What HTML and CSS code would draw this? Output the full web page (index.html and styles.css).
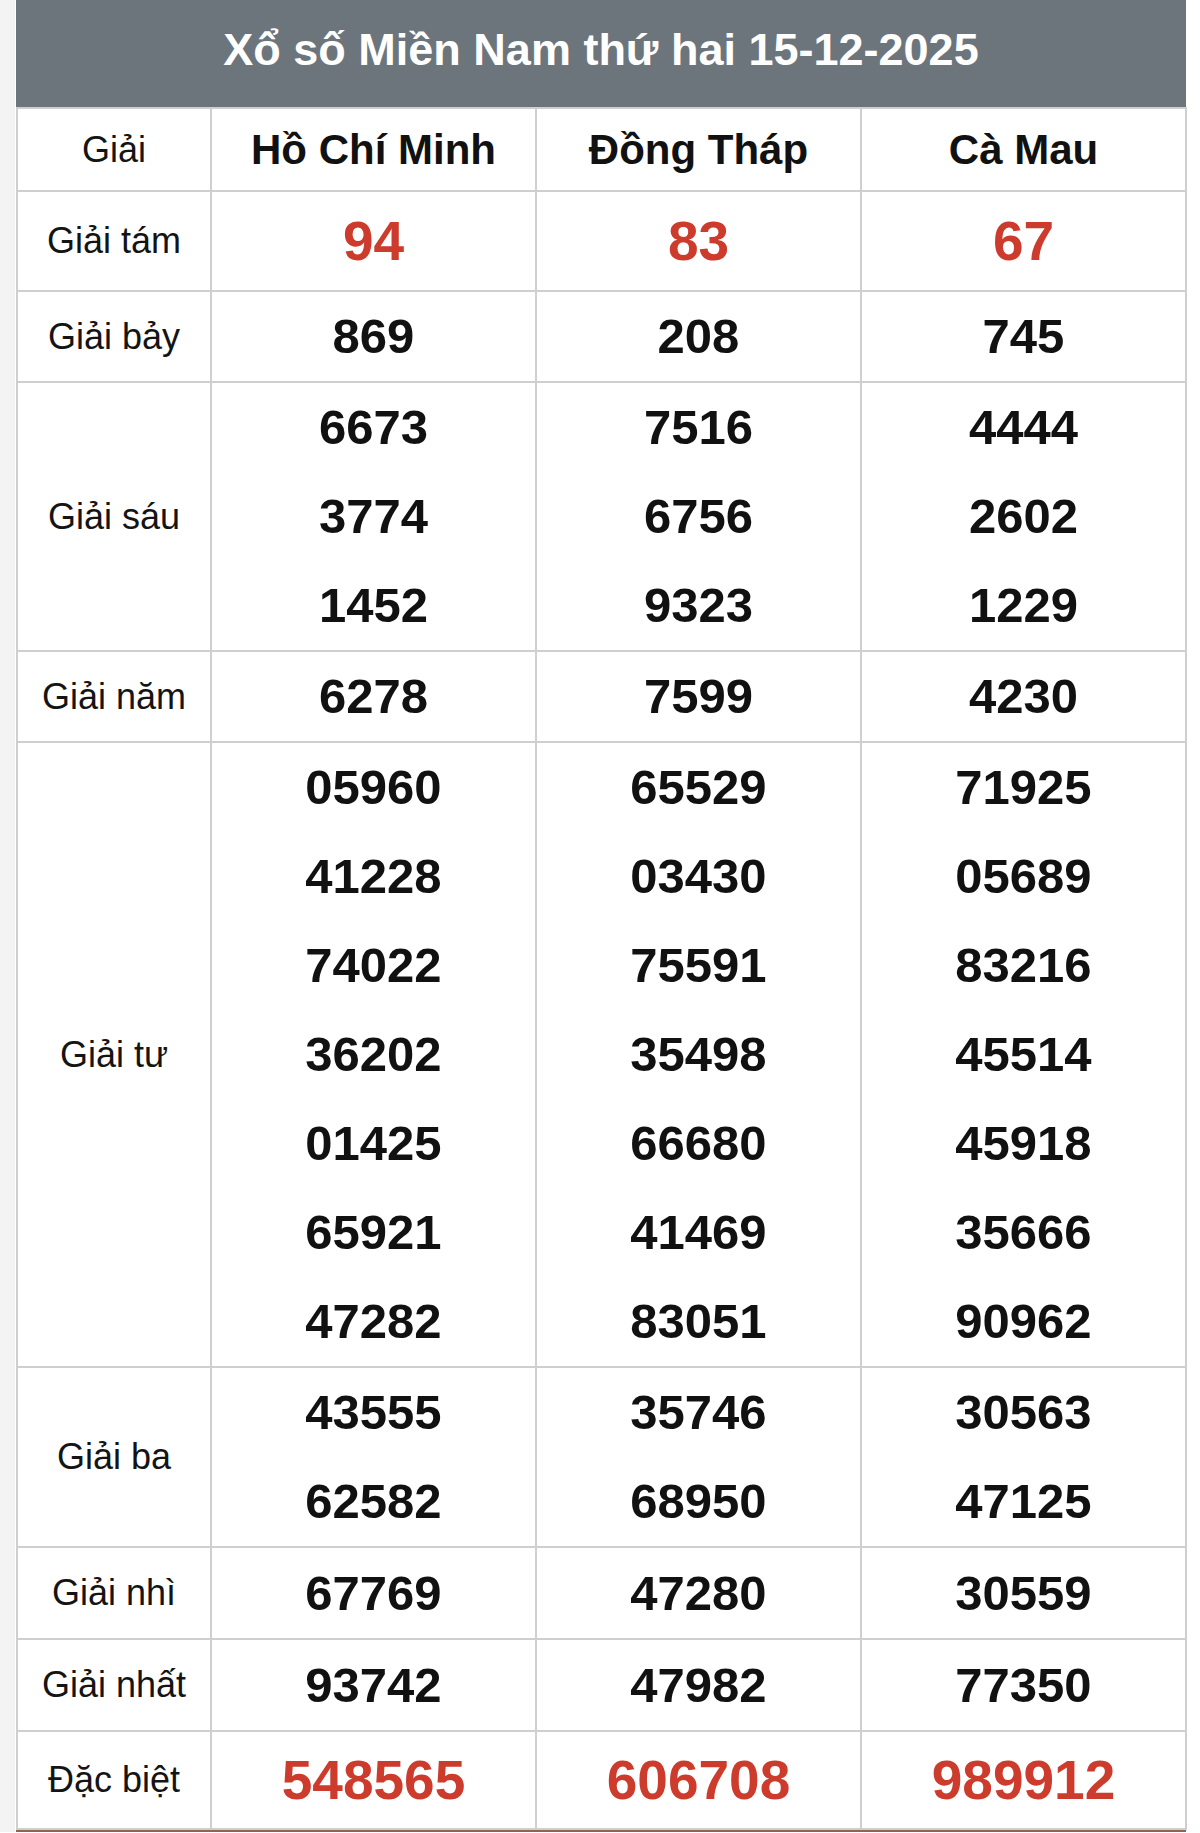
FILE: index.html
```html
<!DOCTYPE html>
<html lang="vi">
<head>
<meta charset="utf-8">
<title>Xổ số Miền Nam thứ hai 15-12-2025</title>
<link rel="stylesheet" href="styles.css">
</head>
<body>
<div class="page">
  <div class="board">
    <div class="title">Xổ số Miền Nam thứ hai 15-12-2025</div>
    <table class="kq">
      <colgroup>
        <col class="c-label">
        <col class="c-prov">
        <col class="c-prov">
        <col class="c-prov">
      </colgroup>
      <thead>
        <tr class="r-head">
          <th class="lbl">Giải</th>
          <th class="prov">Hồ Chí Minh</th>
          <th class="prov">Đồng Tháp</th>
          <th class="prov">Cà Mau</th>
        </tr>
      </thead>
      <tbody>
        <tr class="r-g8">
          <td class="lbl">Giải tám</td>
          <td><div class="num red big">94</div></td>
          <td><div class="num red big">83</div></td>
          <td><div class="num red big">67</div></td>
        </tr>
        <tr>
          <td class="lbl">Giải bảy</td>
          <td><div class="num">869</div></td>
          <td><div class="num">208</div></td>
          <td><div class="num">745</div></td>
        </tr>
        <tr>
          <td class="lbl">Giải sáu</td>
          <td><div class="num">6673</div><div class="num">3774</div><div class="num">1452</div></td>
          <td><div class="num">7516</div><div class="num">6756</div><div class="num">9323</div></td>
          <td><div class="num">4444</div><div class="num">2602</div><div class="num">1229</div></td>
        </tr>
        <tr>
          <td class="lbl">Giải năm</td>
          <td><div class="num">6278</div></td>
          <td><div class="num">7599</div></td>
          <td><div class="num">4230</div></td>
        </tr>
        <tr>
          <td class="lbl">Giải tư</td>
          <td>
            <div class="num">05960</div><div class="num">41228</div><div class="num">74022</div><div class="num">36202</div><div class="num">01425</div><div class="num">65921</div><div class="num">47282</div>
          </td>
          <td>
            <div class="num">65529</div><div class="num">03430</div><div class="num">75591</div><div class="num">35498</div><div class="num">66680</div><div class="num">41469</div><div class="num">83051</div>
          </td>
          <td>
            <div class="num">71925</div><div class="num">05689</div><div class="num">83216</div><div class="num">45514</div><div class="num">45918</div><div class="num">35666</div><div class="num">90962</div>
          </td>
        </tr>
        <tr>
          <td class="lbl">Giải ba</td>
          <td><div class="num">43555</div><div class="num">62582</div></td>
          <td><div class="num">35746</div><div class="num">68950</div></td>
          <td><div class="num">30563</div><div class="num">47125</div></td>
        </tr>
        <tr class="r-single">
          <td class="lbl">Giải nhì</td>
          <td><div class="num">67769</div></td>
          <td><div class="num">47280</div></td>
          <td><div class="num">30559</div></td>
        </tr>
        <tr class="r-single">
          <td class="lbl">Giải nhất</td>
          <td><div class="num">93742</div></td>
          <td><div class="num">47982</div></td>
          <td><div class="num">77350</div></td>
        </tr>
        <tr class="r-db">
          <td class="lbl">Đặc biệt</td>
          <td><div class="num red big">548565</div></td>
          <td><div class="num red big">606708</div></td>
          <td><div class="num red big">989912</div></td>
        </tr>
      </tbody>
    </table>
    <div class="edge"></div>
  </div>
</div>
</body>
</html>
```

FILE: styles.css
```css
html, body {
  margin: 0;
  padding: 0;
  background: #ffffff;
}

body {
  font-family: "Liberation Sans", Arial, Helvetica, sans-serif;
  color: #111111;
}

.page {
  padding: 0 14px 0 16px;
  background: linear-gradient(to right, #f3f3f3 15px, #ffffff 15px);
}

.board {
  width: 1170px;
  background: #ffffff;
}

.title {
  height: 107px;
  line-height: 100px;
  background: #6c757c;
  color: #ffffff;
  font-weight: bold;
  font-size: 45px;
  text-align: center;
}

.kq {
  width: 1170px;
  border-collapse: collapse;
  table-layout: fixed;
  background: #ffffff;
}

.c-label {
  width: 194px;
}

.c-prov {
  width: 325px;
}

.kq th,
.kq td {
  border: 2px solid #cfcfcf;
  padding: 0;
  text-align: center;
  vertical-align: middle;
}

.kq .lbl {
  font-weight: normal;
  font-size: 36px;
  color: #141414;
}

.r-head th {
  height: 81px;
  line-height: 81px;
}

.kq .prov {
  font-weight: bold;
  font-size: 42px;
  color: #111111;
}

.num {
  font-weight: bold;
  font-size: 49px;
  line-height: 89px;
  color: #111111;
}

.r-single .num {
  line-height: 90px;
}

.num.red {
  color: #cc3b2c;
}

.num.big {
  font-size: 55px;
}

.r-g8 .num {
  line-height: 98px;
}

.r-db .num {
  line-height: 96px;
}

.edge {
  height: 2px;
  background: #8e6456;
}
```
